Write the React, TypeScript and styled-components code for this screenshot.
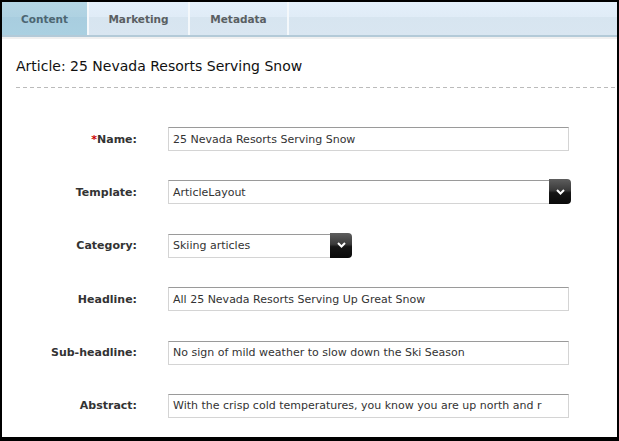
import React from 'react';
import styled, { createGlobalStyle } from 'styled-components';

const GlobalStyle = createGlobalStyle`
  html, body {
    margin: 0;
    padding: 0;
    background: #000;
  }
  * {
    box-sizing: border-box;
  }
`;

const Frame = styled.div`
  width: 619px;
  height: 441px;
  border-style: solid;
  border-color: #000;
  border-width: 2px 2px 4px 2px;
  background: #fff;
  overflow: hidden;
  font-family: 'DejaVu Sans', Verdana, sans-serif;
  color: #333;
`;

const TabBar = styled.div`
  display: flex;
  height: 35px;
  background: linear-gradient(#e4effa 0%, #e0ecf7 45%, #d7e5f0 46%, #d9e6f1 100%);
  border-bottom: 2px solid #b3cad8;
`;

const Tab = styled.div<{ $active?: boolean; $width: number }>`
  width: ${(p) => p.$width}px;
  display: flex;
  align-items: center;
  justify-content: center;
  font-size: 10.5px;
  font-weight: bold;
  color: ${(p) => (p.$active ? '#4c6672' : '#5a5f63')};
  background: ${(p) =>
    p.$active
      ? 'linear-gradient(#b4d5e4 0%, #afd2e2 45%, #a8cddf 46%, #aad0e1 100%)'
      : 'transparent'};
  border-right: 2px solid #f4f8fb;
`;

const Shade = styled.div`
  height: 2px;
  background: #f0f0f0;
`;

const Title = styled.h1`
  margin: 0;
  padding: 19px 0 0 14px;
  height: 48px;
  font-size: 14px;
  font-weight: normal;
  color: #111;
  line-height: 17px;
`;

const Rule = styled.div`
  margin-left: 14px;
  height: 1px;
  background-image: linear-gradient(to right, #bbb 0 4px, transparent 4px 7px);
  background-size: 7px 1px;
`;

const Form = styled.div`
  display: grid;
  grid-template-columns: 135px 1fr;
  column-gap: 31px;
  row-gap: 29.4px;
  padding-top: 39px;
`;

const Label = styled.label`
  display: flex;
  align-items: center;
  justify-content: flex-end;
  height: 24px;
  font-size: 11px;
  font-weight: bold;
  color: #333;
`;

const Required = styled.span`
  color: #c00;
`;

const Field = styled.div<{ $width: number }>`
  width: ${(p) => p.$width}px;
  height: 24px;
  display: flex;
  align-items: center;
  padding-left: 4px;
  font-size: 11px;
  color: #333;
  white-space: nowrap;
  overflow: hidden;
  border: 1px solid #d4d4d4;
  border-top-color: #9a9a9a;
  background: #fff;
`;

const SelectWrap = styled.div`
  display: flex;
  align-items: center;
`;

const SelectBox = styled(Field)`
  border-right: none;
`;

const DropButton = styled.div`
  width: 22px;
  height: 25px;
  margin-top: -1px;
  border-radius: 0 4px 4px 0;
  background: linear-gradient(#5e5e5e 0%, #3a3a3a 45%, #161616 55%, #0a0a0a 100%);
  display: flex;
  align-items: center;
  justify-content: center;
`;

const Chevron = () => (
  <svg width="9" height="6" viewBox="0 0 9 6">
    <path d="M1 1 L4.5 4.5 L8 1" stroke="#fff" strokeWidth="2" fill="none" />
  </svg>
);

interface RowProps {
  label: string;
  required?: boolean;
  children: React.ReactNode;
}

const Row = ({ label, required, children }: RowProps) => (
  <>
    <Label>
      {required && <Required>*</Required>}
      {label}:
    </Label>
    <div>{children}</div>
  </>
);

const Select = ({ value, width }: { value: string; width: number }) => (
  <SelectWrap>
    <SelectBox $width={width}>{value}</SelectBox>
    <DropButton>
      <Chevron />
    </DropButton>
  </SelectWrap>
);

const App = () => (
  <>
    <GlobalStyle />
    <Frame>
      <TabBar>
        <Tab $active $width={87}>Content</Tab>
        <Tab $width={101}>Marketing</Tab>
        <Tab $width={99}>Metadata</Tab>
      </TabBar>
      <Shade />
      <Title>Article: 25 Nevada Resorts Serving Snow</Title>
      <Rule />
      <Form>
        <Row label="Name" required>
          <Field $width={401}>25 Nevada Resorts Serving Snow</Field>
        </Row>
        <Row label="Template">
          <Select value="ArticleLayout" width={381} />
        </Row>
        <Row label="Category">
          <Select value="Skiing articles" width={162} />
        </Row>
        <Row label="Headline">
          <Field $width={401}>All 25 Nevada Resorts Serving Up Great Snow</Field>
        </Row>
        <Row label="Sub-headline">
          <Field $width={401}>No sign of mild weather to slow down the Ski Season</Field>
        </Row>
        <Row label="Abstract">
          <Field $width={401}>With the crisp cold temperatures, you know you are up north and r</Field>
        </Row>
      </Form>
    </Frame>
  </>
);

export default App;
